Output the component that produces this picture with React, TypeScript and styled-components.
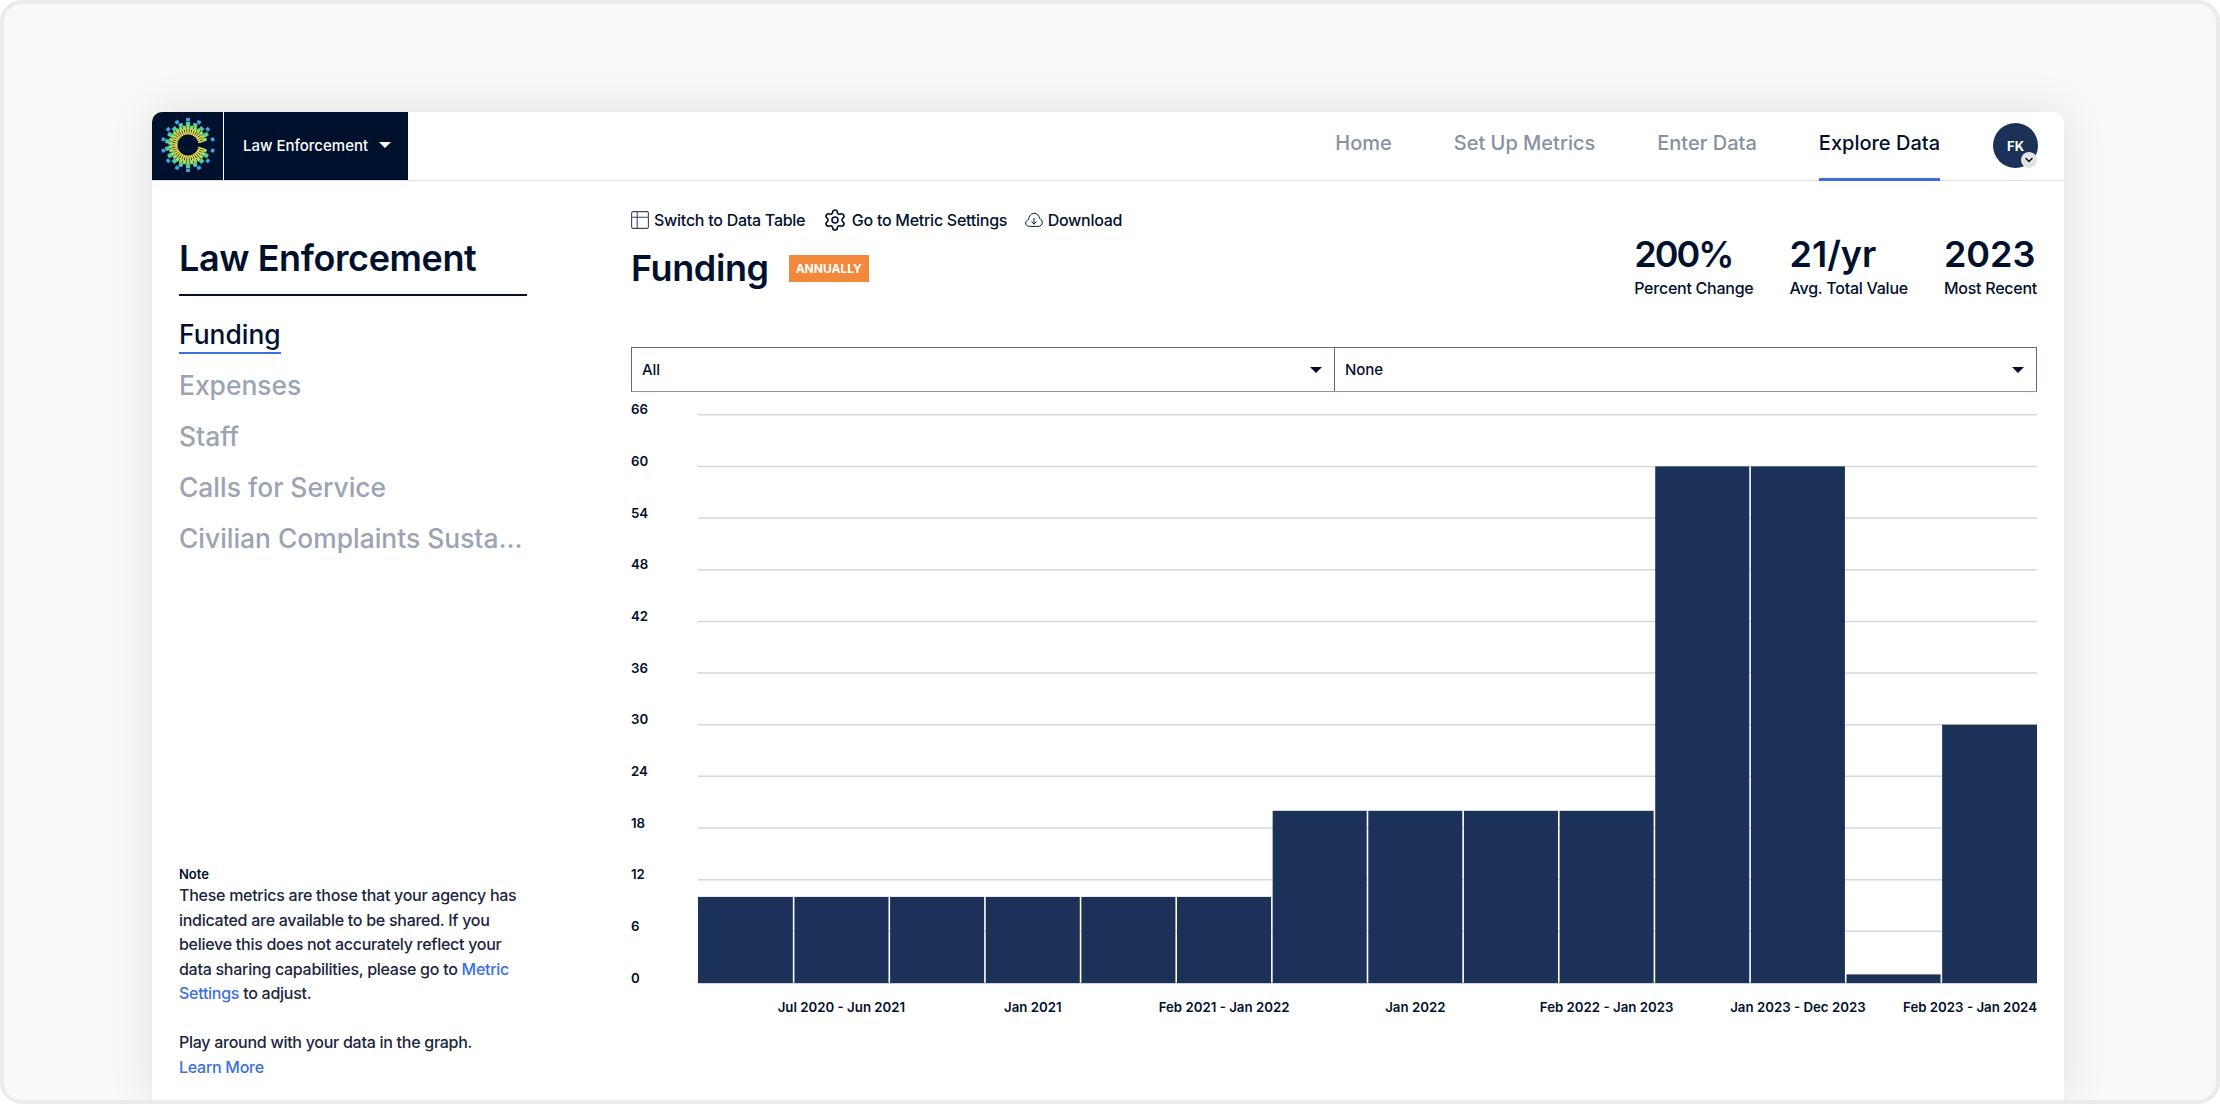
import React from "react";
import styled, { createGlobalStyle } from "styled-components";
import { Settings, ChevronDown } from "lucide-react";

const Global = createGlobalStyle`
  html, body { margin: 0; padding: 0; background: #ffffff; }
  * { box-sizing: border-box; }
  body { font-family: Inter, "Liberation Sans", sans-serif; color: #00112e; }
`;

const Frame = styled.div`
  width: 2220px;
  height: 1104px;
  border: 4px solid #ebebeb;
  border-radius: 22px;
  background: #f9f9f7;
  padding: 108px 152px 0 148px;
  overflow: hidden;
`;

const Card = styled.div`
  height: 100%;
  display: flex;
  flex-direction: column;
  background: #ffffff;
  border-radius: 10px 10px 0 0;
  box-shadow: 0 0 46px rgba(0, 0, 0, 0.11);
  overflow: hidden;
`;

const Header = styled.header`
  height: 69px;
  flex: none;
  display: flex;
  align-items: stretch;
  border-bottom: 1px solid #dcdce4;
  padding-right: 26px;
`;

const LogoCell = styled.div`
  width: 71px;
  background: #00112e;
  display: flex;
  align-items: center;
  justify-content: center;
  padding-bottom: 2px;
`;

const AgencyButton = styled.div`
  width: 184px;
  margin-left: 1px;
  background: #00112e;
  color: #ffffff;
  display: flex;
  align-items: center;
  padding: 0 0 2px 19px;
  gap: 11px;
  font-size: 15px;
  font-weight: 500;
`;

const Caret = styled.span<{ $color: string }>`
  width: 0;
  height: 0;
  border-left: 6px solid transparent;
  border-right: 6px solid transparent;
  border-top: 6px solid ${(p) => p.$color};
`;

const Tabs = styled.nav`
  margin-left: auto;
  display: flex;
  gap: 62px;
`;

const Tab = styled.div<{ $active?: boolean }>`
  display: flex;
  align-items: center;
  font-size: 20px;
  font-weight: 500;
  padding-bottom: 5px;
  color: ${(p) => (p.$active ? "#00112e" : "#8a90a2")};
  border-bottom: 3px solid ${(p) => (p.$active ? "#3b70de" : "transparent")};
  margin-bottom: -1px;
`;

const Avatar = styled.div`
  position: relative;
  width: 45px;
  height: 45px;
  margin: 11px 0 0 53px;
  border-radius: 50%;
  background: #1c3158;
  color: #ffffff;
  font-size: 13px;
  font-weight: 700;
  display: flex;
  align-items: center;
  justify-content: center;
`;

const AvatarBadge = styled.span`
  position: absolute;
  right: 1px;
  bottom: 0;
  width: 16px;
  height: 16px;
  border-radius: 50%;
  background: #e3e3e3;
  color: #00112e;
  display: flex;
  align-items: center;
  justify-content: center;
`;

const Body = styled.div`
  flex: 1;
  min-height: 0;
  display: flex;
  padding: 0 27px 0 27px;
`;

const Sidebar = styled.aside`
  width: 348px;
  flex: none;
  display: flex;
  flex-direction: column;
  padding: 59px 0 21px;
`;

const SideTitle = styled.h1`
  margin: 0;
  font-size: 36px;
  line-height: 36px;
  font-weight: 600;
  letter-spacing: -0.4px;
  padding-bottom: 18px;
  border-bottom: 2px solid #00112e;
`;

const SideNav = styled.div`
  display: flex;
  flex-direction: column;
  gap: 17px;
  margin-top: 21px;
`;

const SideItem = styled.div<{ $active?: boolean }>`
  align-self: flex-start;
  max-width: 100%;
  line-height: 34px;
  font-size: 26.4px;
  font-weight: 500;
  white-space: nowrap;
  overflow: hidden;
  text-overflow: ellipsis;
  color: ${(p) => (p.$active ? "#00112e" : "#9ca3b4")};
  box-shadow: ${(p) => (p.$active ? "inset 0 -2px 0 #3b70de" : "none")};
  height: ${(p) => (p.$active ? "37px" : "34px")};
  margin-bottom: ${(p) => (p.$active ? "-3px" : "0")};
`;

const Note = styled.div`
  margin-top: auto;
  font-size: 16px;
  line-height: 24.5px;
  font-weight: 500;
  letter-spacing: -0.27px;
  color: #1a2540;
`;

const NoteLabel = styled.div`
  font-size: 13px;
  line-height: 18px;
  font-weight: 600;
  letter-spacing: 0;
  color: #00112e;
`;

const NoteGap = styled.div`
  height: 24.5px;
`;

const Link = styled.a`
  color: #3b70de;
`;

const Main = styled.main`
  flex: 1;
  min-width: 0;
  margin-left: 104px;
  padding-top: 28px;
  display: flex;
  flex-direction: column;
`;

const Actions = styled.div`
  height: 22px;
  display: flex;
  align-items: center;
  gap: 17.5px;
`;

const Action = styled.div`
  display: flex;
  align-items: center;
  gap: 5px;
  font-size: 16px;
  font-weight: 500;
  letter-spacing: -0.26px;
  white-space: nowrap;
`;

const TitleRow = styled.div`
  margin-top: 5px;
  display: flex;
  justify-content: space-between;
  align-items: flex-start;
`;

const MetricHead = styled.div`
  padding-top: 14px;
  display: flex;
  align-items: center;
  gap: 20px;
`;

const MetricTitle = styled.h2`
  margin: 0;
  font-size: 36px;
  line-height: 36px;
  font-weight: 600;
  letter-spacing: -0.4px;
`;

const Badge = styled.span`
  width: 80px;
  height: 27px;
  background: #f2893a;
  color: #ffffff;
  font-size: 12px;
  font-weight: 700;
  display: flex;
  align-items: center;
  justify-content: center;
`;

const Stats = styled.div`
  display: flex;
  gap: 36px;
`;

const Stat = styled.div`
  display: flex;
  flex-direction: column;
  gap: 6px;
`;

const StatValue = styled.div<{ $tight?: boolean }>`
  font-size: 36px;
  line-height: 36px;
  font-weight: 600;
  letter-spacing: ${(p) => (p.$tight ? "-2px" : "0")};
`;

const StatLabel = styled.div`
  font-size: 16px;
  line-height: 20px;
  font-weight: 500;
  letter-spacing: -0.25px;
  white-space: nowrap;
`;

const Selects = styled.div`
  margin-top: 49px;
  height: 45px;
  display: grid;
  grid-template-columns: 702px 1fr;
  border: 1px solid #5f6b86;
  border-bottom-color: #8e95a8;
`;

const SelectBox = styled.div<{ $divided?: boolean }>`
  display: flex;
  align-items: center;
  justify-content: space-between;
  padding: 0 12px 0 10px;
  font-size: 15px;
  font-weight: 500;
  letter-spacing: -0.1px;
  border-left: ${(p) => (p.$divided ? "1px solid #5f6b86" : "none")};
`;

const ChartSvg = styled.svg`
  display: block;
  margin-top: 9px;
  width: 1406px;
  height: 629px;
  flex: none;
`;

const AxisText = styled.text`
  font-family: Inter, "Liberation Sans", sans-serif;
  font-size: 13.25px;
  font-weight: 600;
  fill: #00112e;
`;

/* ---------- Drawings ---------- */

const polar = (count: number, skip: number) =>
  Array.from({ length: count }, (_, i) => ((i + 0.5) * 360) / count).filter(
    (a) => a > skip && a < 360 - skip
  );

const Logo = () => {
  const c = 27;
  const ring = (
    angles: number[],
    r0: number,
    r1: number,
    w: number,
    fill: string,
    key: string
  ) =>
    angles.map((a) => (
      <rect
        key={key + a}
        x={c + r0}
        y={c - w / 2}
        width={r1 - r0}
        height={w}
        fill={fill}
        transform={`rotate(${a} ${c} ${c})`}
      />
    ));
  return (
    <svg width="54" height="54" viewBox="0 0 54 54" aria-hidden="true">
      {ring(polar(38, 12), 10.5, 16, 1.6, "#f2e64c", "y")}
      {ring(polar(30, 12), 15.5, 19.5, 3.2, "#a6dc66", "g")}
      {ring(polar(18, 13), 19, 23, 4.2, "#52d09a", "t")}
      {ring(polar(14, 8), 23.6, 27, 3.8, "#3fa6f0", "b")}
    </svg>
  );
};

const TableIcon = () => (
  <svg width="18" height="18" viewBox="0 0 18 18" fill="none" stroke="#3c4660" strokeWidth="1.1">
    <rect x="0.6" y="0.6" width="16.8" height="16.8" rx="1.5" />
    <path d="M0.6 6.2H17.4M6.2 0.6V17.4" />
  </svg>
);

const CloudIcon = () => (
  <svg width="18" height="16" viewBox="0 0 18 16" fill="none" stroke="#00112e" strokeWidth="0.95" strokeLinecap="round" strokeLinejoin="round">
    <path d="M4.4 14.4C2.3 14.4 0.7 12.9 0.7 11C0.7 9.3 1.9 7.9 3.6 7.6C3.8 4.1 6.2 1.3 9.2 1.3C12 1.3 14.2 3.6 14.6 6.6C16.2 7.1 17.3 8.6 17.3 10.4C17.3 12.7 15.6 14.4 13.4 14.4Z" />
    <path d="M9 6.4V12M6.7 9.8L9 12.1L11.3 9.8" />
  </svg>
);

const bars = [10, 10, 10, 10, 10, 10, 20, 20, 20, 20, 60, 60, 1, 30];
const ticks = [66, 60, 54, 48, 42, 36, 30, 24, 18, 12, 6, 0];
const xLabels: { i: number; t: string; anchor?: "end" }[] = [
  { i: 1, t: "Jul 2020 - Jun 2021" },
  { i: 3, t: "Jan 2021" },
  { i: 5, t: "Feb 2021 - Jan 2022" },
  { i: 7, t: "Jan 2022" },
  { i: 9, t: "Feb 2022 - Jan 2023" },
  { i: 11, t: "Jan 2023 - Dec 2023" },
  { i: 13, t: "Feb 2023 - Jan 2024", anchor: "end" },
];

const X0 = 67;
const X1 = 1406;
const BASE = 582;
const UNIT = 8.61;
const STEP = (X1 - X0) / bars.length;

const Chart = () => (
  <ChartSvg viewBox="0 0 1406 629">
    {ticks.map((v) => {
      const y = BASE - v * UNIT;
      return (
        <g key={v}>
          <line x1={X0} x2={X1} y1={y} y2={y} stroke={v === 0 ? "#c4c6cf" : "#d6d7da"} strokeWidth={1.5} />
          <AxisText x={0} y={y - 0.5}>
            {v}
          </AxisText>
        </g>
      );
    })}
    {bars.map((v, i) => (
      <rect
        key={i}
        x={X0 + i * STEP + (i === 0 ? 0 : 0.8)}
        y={BASE - v * UNIT}
        width={STEP - (i === 0 || i === bars.length - 1 ? 0.8 : 1.6)}
        height={v * UNIT}
        fill="#1c3158"
      />
    ))}
    {xLabels.map((l) => (
      <AxisText
        key={l.t}
        x={l.anchor === "end" ? X1 : X0 + (l.i + 0.5) * STEP}
        y={611}
        textAnchor={l.anchor ?? "middle"}
      >
        {l.t}
      </AxisText>
    ))}
  </ChartSvg>
);

export default function App() {
  return (
    <>
      <Global />
      <Frame>
        <Card>
          <Header>
            <LogoCell>
              <Logo />
            </LogoCell>
            <AgencyButton>
              Law Enforcement
              <Caret $color="#ffffff" />
            </AgencyButton>
            <Tabs>
              <Tab>Home</Tab>
              <Tab>Set Up Metrics</Tab>
              <Tab>Enter Data</Tab>
              <Tab $active>Explore Data</Tab>
            </Tabs>
            <Avatar>
              FK
              <AvatarBadge>
                <ChevronDown size={12} strokeWidth={3} />
              </AvatarBadge>
            </Avatar>
          </Header>
          <Body>
            <Sidebar>
              <SideTitle>Law Enforcement</SideTitle>
              <SideNav>
                <SideItem $active>Funding</SideItem>
                <SideItem>Expenses</SideItem>
                <SideItem>Staff</SideItem>
                <SideItem>Calls for Service</SideItem>
                <SideItem>Civilian Complaints Sustained</SideItem>
              </SideNav>
              <Note>
                <NoteLabel>Note</NoteLabel>
                These metrics are those that your agency has indicated are available to be shared. If you
                believe this does not accurately reflect your data sharing capabilities, please go to{" "}
                <Link>Metric Settings</Link> to adjust.
                <NoteGap />
                Play around with your data in the graph.
                <br />
                <Link>Learn More</Link>
              </Note>
            </Sidebar>
            <Main>
              <Actions>
                <Action>
                  <TableIcon />
                  Switch to Data Table
                </Action>
                <Action>
                  <Settings size={24} strokeWidth={1.6} />
                  Go to Metric Settings
                </Action>
                <Action>
                  <CloudIcon />
                  Download
                </Action>
              </Actions>
              <TitleRow>
                <MetricHead>
                  <MetricTitle>Funding</MetricTitle>
                  <Badge>ANNUALLY</Badge>
                </MetricHead>
                <Stats>
                  <Stat>
                    <StatValue $tight>200%</StatValue>
                    <StatLabel>Percent Change</StatLabel>
                  </Stat>
                  <Stat>
                    <StatValue>21/yr</StatValue>
                    <StatLabel>Avg. Total Value</StatLabel>
                  </Stat>
                  <Stat>
                    <StatValue>2023</StatValue>
                    <StatLabel>Most Recent</StatLabel>
                  </Stat>
                </Stats>
              </TitleRow>
              <Selects>
                <SelectBox>
                  All
                  <Caret $color="#00112e" />
                </SelectBox>
                <SelectBox $divided>
                  None
                  <Caret $color="#00112e" />
                </SelectBox>
              </Selects>
              <Chart />
            </Main>
          </Body>
        </Card>
      </Frame>
    </>
  );
}
